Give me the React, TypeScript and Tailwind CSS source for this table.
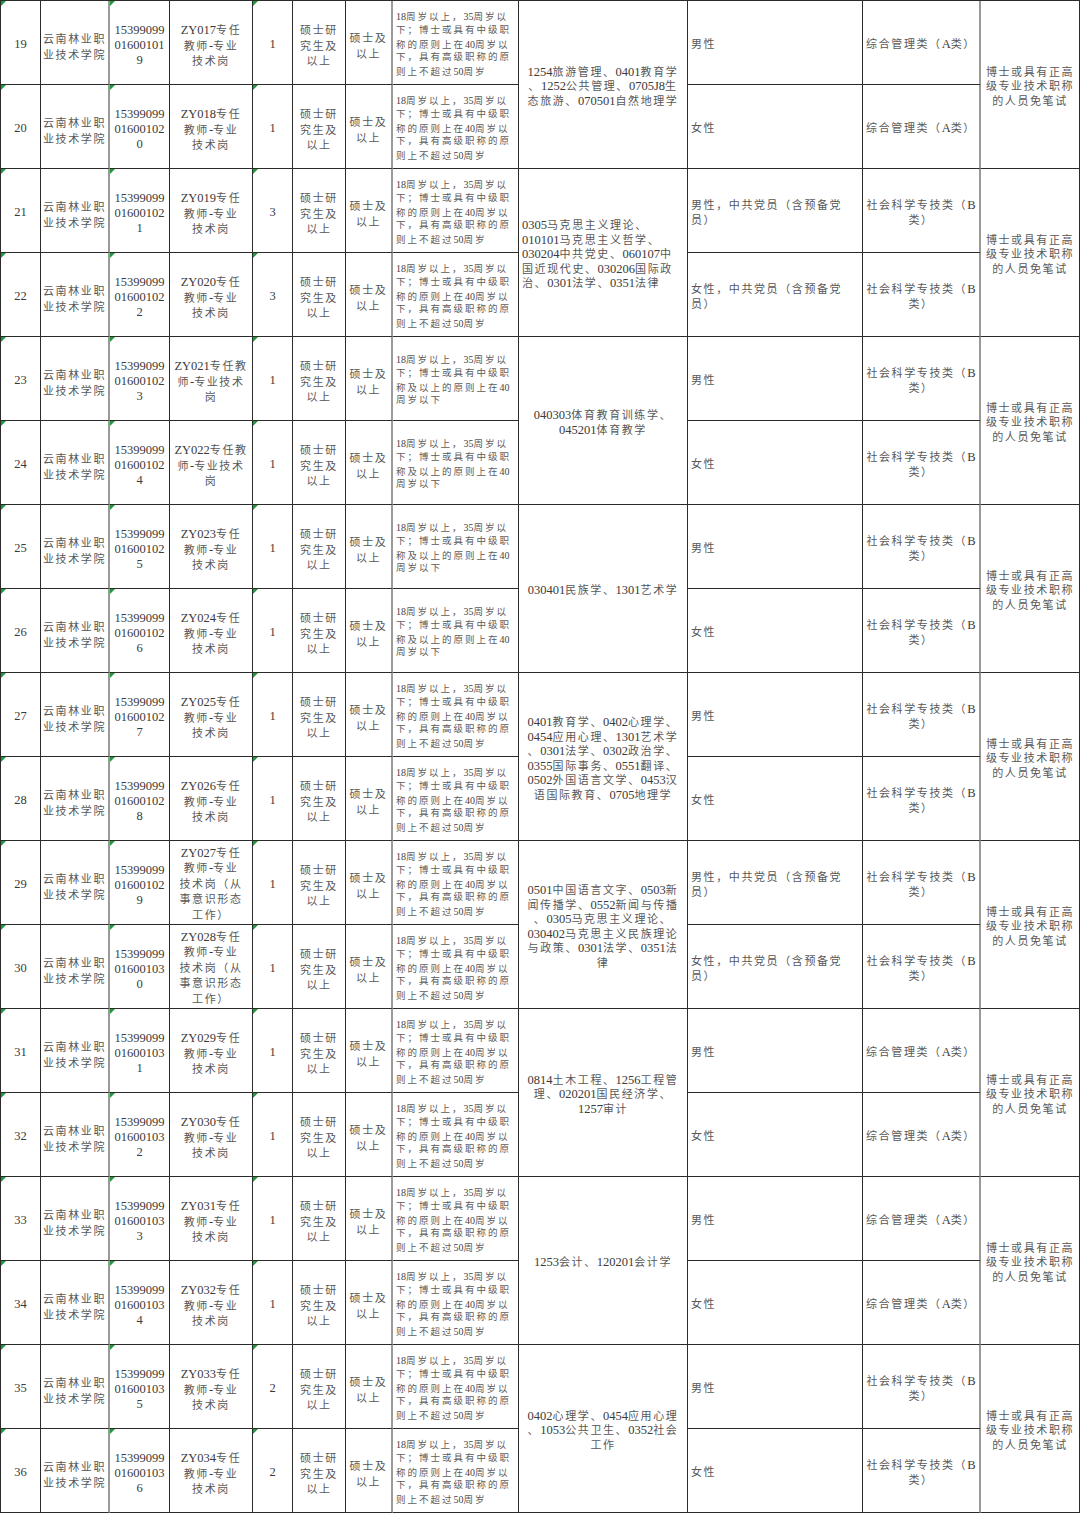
import React from 'react';

type Align = 'center' | 'left';
type Size = 'main' | 'age';

const CJK = /([\u3000-\u303f\u4e00-\u9fff\uff00-\uffef]+)/;

function Txt({ s, size }: { s: string; size: Size }) {
  const parts = s.split(CJK).filter(p => p.length > 0);
  return (
    <>
      {parts.map((p, i) =>
        CJK.test(p) ? (
          <span
            key={i}
            className={
              size === 'age'
                ? 'text-[9.5px] tracking-[2px] text-[#5c5c5c]'
                : 'text-[11px] tracking-[1.6px] text-[#585858]'
            }
          >
            {p}
          </span>
        ) : (
          <span key={i} className={size === 'age' ? 'text-[10px] text-[#444]' : 'text-[12.5px] text-[#3a3a3a]'}>
            {p}
          </span>
        )
      )}
    </>
  );
}

function Cell({
  lines,
  align = 'center',
  size = 'main',
  lh = 'h-[15.5px] leading-[15.5px]',
  span = false,
  extra = '',
  mark = false,
  pad = 'pt-[4px]',
}: {
  lines: string[];
  align?: Align;
  size?: Size;
  lh?: string;
  span?: boolean;
  extra?: string;
  mark?: boolean;
  pad?: string;
}) {
  return (
    <div
      className={
        'relative flex items-center border-r border-b border-[#2b2b2b] ' +
        pad +
        ' ' +
        (align === 'center' ? 'justify-center text-center ' : 'justify-start text-left pl-[3px] ') +
        (span ? 'row-span-2 ' : '') +
        extra
      }
    >
      {mark && (
        <span className="absolute left-0 top-0 h-0 w-0 border-t-[5px] border-r-[5px] border-t-[#1f9a3a] border-r-transparent" />
      )}
      <div className="text-[8px]">
        {lines.map((l, i) => (
          <div key={i} className={'whitespace-nowrap ' + lh}>
            <Txt s={l} size={size} />
          </div>
        ))}
      </div>
    </div>
  );
}

const ageLong = [
  '18周岁以上，35周岁以',
  '下；博士或具有中级职',
  '称的原则上在40周岁以',
  '下，具有高级职称的原',
  '则上不超过50周岁',
];
const ageShort = ['18周岁以上，35周岁以', '下；博士或具有中级职', '称及以上的原则上在40', '周岁以下'];

const notes = ['博士或具有正高', '级专业技术职称', '的人员免笔试'];

const majors: { lines: string[]; align: Align }[] = [
  { lines: ['1254旅游管理、0401教育学', '、1252公共管理、0705J8生', '态旅游、070501自然地理学'], align: 'center' },
  {
    lines: ['0305马克思主义理论、', '010101马克思主义哲学、', '030204中共党史、060107中', '国近现代史、030206国际政', '治、0301法学、0351法律'],
    align: 'left',
  },
  { lines: ['040303体育教育训练学、', '045201体育教学'], align: 'center' },
  { lines: ['030401民族学、1301艺术学'], align: 'center' },
  {
    lines: [
      '0401教育学、0402心理学、',
      '0454应用心理、1301艺术学',
      '、0301法学、0302政治学、',
      '0355国际事务、0551翻译、',
      '0502外国语言文学、0453汉',
      '语国际教育、0705地理学',
    ],
    align: 'center',
  },
  {
    lines: [
      '0501中国语言文字、0503新',
      '闻传播学、0552新闻与传播',
      '、0305马克思主义理论、',
      '030402马克思主义民族理论',
      '与政策、0301法学、0351法',
      '律',
    ],
    align: 'center',
  },
  { lines: ['0814土木工程、1256工程管', '理、020201国民经济学、', '1257审计'], align: 'center' },
  { lines: ['1253会计、120201会计学'], align: 'center' },
  { lines: ['0402心理学、0454应用心理', '、1053公共卫生、0352社会', '工作'], align: 'center' },
];

function positionLines(n: number): string[] {
  const id = 'ZY0' + (n - 2);
  if (n === 23 || n === 24) return [id + '专任教', '师-专业技术', '岗'];
  if (n === 29 || n === 30) return [id + '专任', '教师-专业', '技术岗（从', '事意识形态', '工作）'];
  return [id + '专任', '教师-专业', '技术岗'];
}

function countOf(n: number) {
  if (n === 21 || n === 22) return '3';
  if (n === 35 || n === 36) return '2';
  return '1';
}

function otherLines(n: number): string[] {
  const sex = n % 2 === 1 ? '男性' : '女性';
  if ([21, 22, 29, 30].includes(n)) return [sex + '，中共党员（含预备党', '员）'];
  return [sex];
}

function examLines(n: number): string[] {
  if ((n >= 19 && n <= 20) || (n >= 31 && n <= 34)) return ['综合管理类（A类）'];
  return ['社会科学专技类（B', '类）'];
}

const gray = 'border-r-[2px] border-r-[#9a9a9a]';

export default function App() {
  const nums = Array.from({ length: 18 }, (_, i) => 19 + i);
  return (
    <div className="w-[1080px] h-[1515px] bg-white font-['Liberation_Serif','Noto_Sans_CJK_SC',serif]">
      <div className="grid grid-cols-[40px_69px_60px_83px_40px_53px_47px_126px_169px_175px_118px_99px] grid-rows-[repeat(18,84px)] border-t border-l border-[#2b2b2b]">
        {nums.map((n, i) => {
          const first = i % 2 === 0;
          const s = String(n);
          const m = majors[Math.floor(i / 2)];
          return (
            <React.Fragment key={n}>
              <Cell lines={[s]} mark />
              <Cell lines={['云南林业职', '业技术学院']} lh="h-[16px] leading-[16px]" extra={gray} pad="pt-[8px]" />
              <Cell lines={['15399099', '016001' + '0' + s[0], s[1]]} lh="h-[15px] leading-[15px]" mark pad="pt-[6px]" />
              <Cell lines={positionLines(n)} pad={n === 29 || n === 30 ? 'pt-[4px]' : 'pt-[8px]'} />
              <Cell lines={[countOf(n)]} mark />
              <Cell lines={['硕士研', '究生及', '以上']} pad="pt-[8px]" />
              <Cell lines={['硕士及', '以上']} extra={gray} pad="pt-[8px]" />
              <Cell
                lines={n >= 23 && n <= 26 ? ageShort : ageLong}
                align="left"
                size="age"
                lh="h-[13.7px] leading-[13.7px]"
              />
              {first && <Cell lines={m.lines} align={m.align} lh="h-[14.5px] leading-[14.5px]" span />}
              <Cell lines={otherLines(n)} align="left" lh="h-[14.5px] leading-[14.5px]" />
              <Cell lines={examLines(n)} lh="h-[14.5px] leading-[14.5px]" extra={gray} />
              {first && <Cell lines={notes} lh="h-[14.5px] leading-[14.5px]" span />}
            </React.Fragment>
          );
        })}
      </div>
    </div>
  );
}
